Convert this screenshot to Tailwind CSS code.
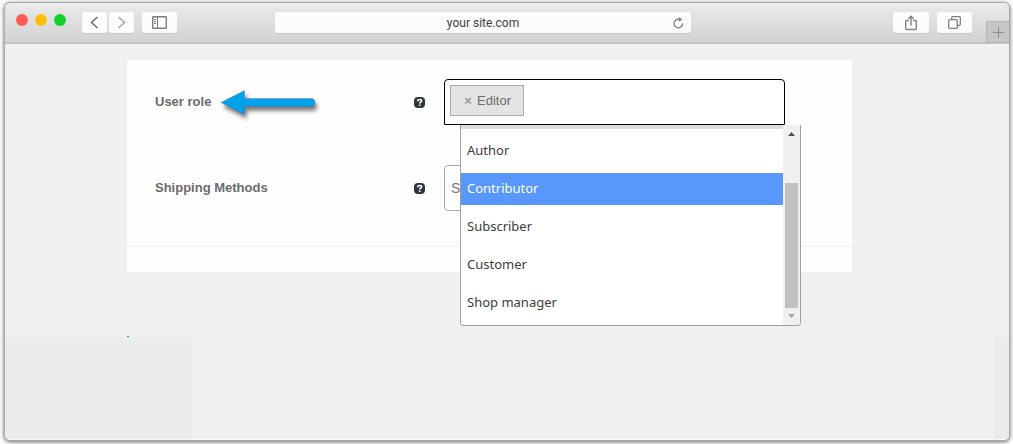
<!DOCTYPE html>
<html lang="en">
  <head>
    <meta charset="UTF-8" />
    <meta name="viewport" content="width=device-width, initial-scale=1.0" />
    <title>your site.com</title>
    <script src="https://cdn.jsdelivr.net/npm/@tailwindcss/browser@4"></script>
  </head>
  <body class="bg-white font-['Liberation_Sans',Arial,sans-serif] text-[13px]">
    <div class="flex min-h-screen flex-col pt-[2px] pr-[3px] pb-[3px] pl-1">
      <!-- Browser window -->
      <div
        class="flex flex-1 flex-col overflow-hidden rounded-md border border-[#a9a9a9] bg-[#f0f0f0] shadow-[0_1px_4px_#0009]"
      >
        <!-- Toolbar -->
        <header
          class="flex h-[41px] items-start border-b-2 border-[#c4c4c4] bg-linear-to-b from-[#ebebeb] to-[#d2d2d2] pl-[11px]"
        >
          <div class="flex gap-[7px] pt-[11px]">
            <span class="size-3 rounded-full bg-[#ff5f52]"></span>
            <span class="size-3 rounded-full bg-[#ffbe0f]"></span>
            <span class="size-3 rounded-full bg-[#12d12f]"></span>
          </div>
          <div class="ml-4 flex gap-[2px] pt-[9px]">
            <button
              type="button"
              aria-label="Back"
              class="flex h-[21px] w-[25px] items-center justify-center rounded-[3px] bg-[#fcfcfc] shadow-[0_1px_0_#0001]"
            >
              <svg width="9" height="13" fill="none" stroke="#6e6e6e" stroke-width="1.6">
                <path d="M7.5 1 1.5 6.5 7.5 12" />
              </svg>
            </button>
            <button
              type="button"
              aria-label="Forward"
              class="flex h-[21px] w-[25px] items-center justify-center rounded-[3px] bg-[#fcfcfc] shadow-[0_1px_0_#0001]"
            >
              <svg width="9" height="13" fill="none" stroke="#a8a8a8" stroke-width="1.6">
                <path d="M1.5 1 7.5 6.5 1.5 12" />
              </svg>
            </button>
          </div>
          <div class="ml-2 pt-[9px]">
            <button
              type="button"
              aria-label="Show sidebar"
              class="flex h-[21px] w-[35px] items-center justify-center rounded-[3px] bg-[#fcfcfc] shadow-[0_1px_0_#0001]"
            >
              <svg width="15" height="13" fill="none" stroke="#7d7d7d">
                <rect x=".7" y=".7" width="13.6" height="11.6" rx=".5" stroke-width="1.4" />
                <path d="M5.5.5v12M2 3.5h2M2 5.5h2M2 7.5h2" />
              </svg>
            </button>
          </div>
          <div class="relative mt-[9px] ml-[98px] flex-1">
            <input
              type="text"
              aria-label="Address"
              value="your site.com"
              class="block h-[21px] w-full rounded-[3px] bg-[#fcfcfc] text-center font-[Roboto,sans-serif] text-xs text-[#3c3c3c] shadow-[0_1px_0_#0001]"
            />
            <button type="button" aria-label="Reload" class="absolute top-[5px] right-[7px]">
              <svg width="11" height="12" fill="none" stroke="#808080" stroke-width="1.3">
                <path d="M9.7 6.3A4.3 4.3 0 1 1 5.4 2.2H8" />
                <path d="M5.7 0 9.3 2.4 5.7 4.8z" fill="#808080" stroke="none" />
              </svg>
            </button>
          </div>
          <div class="mr-[14px] ml-[202px] flex gap-2 pt-[9px]">
            <button
              type="button"
              aria-label="Share"
              class="flex h-[21px] w-9 items-center justify-center rounded-[3px] bg-[#fcfcfc] shadow-[0_1px_0_#0001]"
            >
              <svg width="12" height="16" fill="none" stroke="#808080" stroke-width="1.4">
                <path d="M4 5.5H1.700q-1 0-1 1v7q0 1 1 1h8.600q1 0 1-1v-7q0-1-1-1H8M6 10.500V1M3.500 3.800 6 1.200l2.500 2.600" />
              </svg>
            </button>
            <button
              type="button"
              aria-label="Show tabs"
              class="flex h-[21px] w-[35px] items-center justify-center rounded-[3px] bg-[#fcfcfc] shadow-[0_1px_0_#0001]"
            >
              <svg width="13" height="13" fill="none" stroke="#808080" stroke-width="1.3">
                <rect x=".7" y="3.700" width="8.600" height="8.600" rx="1" />
                <path d="M3.700 3.500V1.700q0-1 1-1h6.600q1 0 1 1v6.600q0 1-1 1H9.500" />
              </svg>
            </button>
          </div>
          <button
            type="button"
            aria-label="New tab"
            class="mt-[18px] flex h-[22px] w-[23px] items-center justify-center border border-r-0 border-[#b4b4b4] bg-[#c6c6c6]"
          >
            <svg width="11" height="11" fill="none" stroke="#8a8a8a">
              <path d="M5.500 0v11M0 5.500h11" />
            </svg>
          </button>
        </header>

        <!-- Page -->
        <main class="flex flex-1 flex-col pt-4">
          <form class="mr-[157px] ml-[122px] bg-[#fefefe] pt-[19px]">
            <div class="flex flex-col gap-10 border-b border-[#f1f1f1] pb-[35px]">
              <div class="flex items-center">
                <div class="flex w-[317px] shrink-0 items-center pl-7">
                  <label for="role" class="font-bold text-[#6b6b6b]">User role</label>
                  <svg
                    class="ml-[9px] drop-shadow-[2px_4px_2px_#0008]"
                    width="96"
                    height="25"
                    fill="#00a2e8"
                  >
                    <path
                      d="M1 12.500 24.500.5v8H91q4 0 4 4t-4 4H24.500v8z"
                      stroke="#7a4fb5"
                      stroke-width=".7"
                      stroke-dasharray="1 1"
                    />
                  </svg>
                  <svg class="mr-[19px] ml-auto" width="11" height="11">
                    <rect width="11" height="11" rx="4" fill="#2f363b" />
                    <path
                      d="M3.600 4.200q0-1.700 2-1.700t2 1.500q0 .9-1.100 1.300-.8.300-.8 1.200M5.700 7.500v1.500"
                      fill="none"
                      stroke="#fff"
                      stroke-width="1.600"
                    />
                  </svg>
                </div>
                <div class="relative w-[341px]">
                  <div
                    class="flex h-[46px] items-start rounded-t border border-black bg-white p-[5px]"
                  >
                    <span
                      class="flex h-[31px] shrink-0 items-center gap-1 border border-[#aaa] bg-[#e4e4e4] px-3 text-[#6b6b6b]"
                    >
                      <button
                        type="button"
                        aria-label="Remove Editor"
                        class="w-[10px] text-center font-bold text-[#999]"
                      >
                        ×
                      </button>
                      Editor
                    </span>
                    <input id="role" type="text" class="h-[31px] min-w-0 flex-1 px-2 outline-none" />
                  </div>
                  <!-- Open list of roles -->
                  <div
                    class="absolute top-[46px] left-4 z-10 flex h-[201px] w-full overflow-hidden rounded-b border border-t-0 border-[#a0a0a0] bg-white"
                  >
                    <select
                      size="5"
                      aria-label="User roles"
                      class="h-full flex-1 appearance-none overflow-hidden border-t-4 border-[#ddd] bg-white font-['Noto_Sans',sans-serif] text-[13px] text-[#3c3c3c] outline-none"
                    >
                      <option class="mt-[6px] h-8 px-[6px] py-[6px] leading-5">Author</option>
                      <option class="mt-[6px] h-8 bg-[#5897fb] px-[6px] py-[6px] leading-5 text-white">
                        Contributor
                      </option>
                      <option class="mt-[6px] h-8 px-[6px] py-[6px] leading-5">Subscriber</option>
                      <option class="mt-[6px] h-8 px-[6px] py-[6px] leading-5">Customer</option>
                      <option class="mt-[6px] h-8 px-[6px] py-[6px] leading-5">Shop manager</option>
                    </select>
                    <div class="flex w-[17px] flex-col items-center bg-[#f0f0f0]">
                      <svg class="mt-[7px]" width="7" height="4" fill="#505050">
                        <path d="M0 4 3.500 0 7 4z" />
                      </svg>
                      <div class="mt-[47px] w-[13px] flex-1 bg-[#c1c1c1]"></div>
                      <svg class="mt-[6px] mb-[7px]" width="7" height="4" fill="#a3a3a3">
                        <path d="M0 0 3.500 4 7 0z" />
                      </svg>
                    </div>
                  </div>
                </div>
              </div>

              <div class="flex items-center">
                <div class="flex w-[317px] shrink-0 items-center pl-7">
                  <label for="shipping" class="font-bold text-[#6b6b6b]">Shipping Methods</label>
                  <svg class="mr-[19px] ml-auto" width="11" height="11">
                    <rect width="11" height="11" rx="4" fill="#2f363b" />
                    <path
                      d="M3.600 4.200q0-1.700 2-1.700t2 1.500q0 .9-1.100 1.300-.8.300-.8 1.200M5.700 7.500v1.500"
                      fill="none"
                      stroke="#fff"
                      stroke-width="1.600"
                    />
                  </svg>
                </div>
                <input
                  id="shipping"
                  type="text"
                  placeholder="S"
                  class="h-[46px] w-[341px] rounded border border-[#aaa] bg-white px-[6px] text-sm placeholder:text-[#777]"
                />
              </div>
            </div>
            <div class="h-[25px]"></div>
          </form>

          <div class="mt-16 ml-[122px] h-px w-[2px] bg-[#0a9be0]"></div>
          <div class="flex flex-1 justify-between border-b border-[#f8f8f8]">
            <div class="w-[187px] bg-[#ebebeb]"></div>
            <div class="w-[15px] bg-[#ebebeb]"></div>
          </div>
        </main>
      </div>
    </div>
  </body>
</html>
